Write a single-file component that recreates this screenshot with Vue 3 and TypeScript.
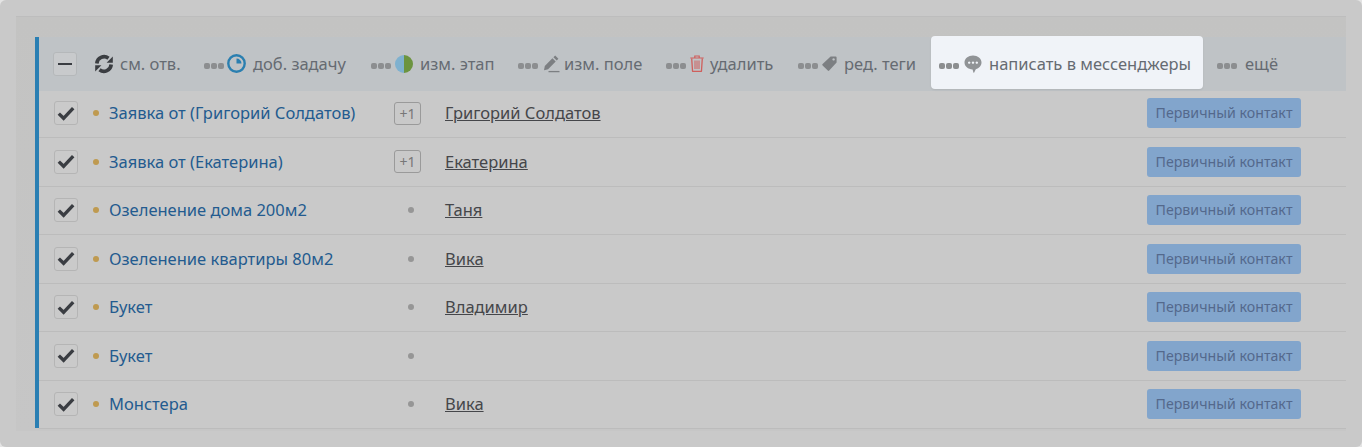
<script setup lang="ts">
interface Row { name: string; extra: boolean; contact: string }
const rows: Row[] = [
  { name: 'Заявка от (Григорий Солдатов)', extra: true, contact: 'Григорий Солдатов' },
  { name: 'Заявка от (Екатерина)', extra: true, contact: 'Екатерина' },
  { name: 'Озеленение дома 200м2', extra: false, contact: 'Таня' },
  { name: 'Озеленение квартиры 80м2', extra: false, contact: 'Вика' },
  { name: 'Букет', extra: false, contact: 'Владимир' },
  { name: 'Букет', extra: false, contact: '' },
  { name: 'Монстера', extra: false, contact: 'Вика' },
]
</script>

<template>
  <div class="page">
    <div class="panel">
      <div class="list">
        <div class="toolbar">
          <span class="minus"><i></i></span>
          <span class="act first">
            <svg class="ic-refresh" width="20" height="20" viewBox="0 0 20 20">
              <path d="M2.800 9.500A7.300 7.300 0 0 1 14.500 4.200" fill="none" stroke="#3b3e42" stroke-width="3.600"/>
              <path d="M18.800 2.600v6.200h-6.200z" fill="#3b3e42"/>
              <path d="M17.200 10.500A7.300 7.300 0 0 1 5.500 15.800" fill="none" stroke="#3b3e42" stroke-width="3.600"/>
              <path d="M1.200 17.400v-6.200h6.200z" fill="#3b3e42"/>
            </svg>
            <span class="txt t1">см. отв.</span>
          </span>
          <span class="act a2">
            <span class="dots"><i></i><i></i><i></i></span>
            <svg class="ic" width="19" height="19" viewBox="0 0 19 19">
              <circle cx="9.500" cy="9.500" r="8.200" fill="none" stroke="#2a7fb0" stroke-width="2.400"/>
              <path d="M9.500 4.500v5h5a5 5 0 0 0-5-5z" fill="#2a7fb0"/>
            </svg>
            <span class="txt t2">доб. задачу</span>
          </span>
          <span class="act a3">
            <span class="dots"><i></i><i></i><i></i></span>
            <svg class="ic" width="18" height="18" viewBox="0 0 18 18">
              <path d="M9 0a9 9 0 0 0 0 18z" fill="#7fb1cf"/>
              <path d="M9 0a9 9 0 0 1 0 18z" fill="#6c9440"/>
            </svg>
            <span class="txt t3">изм. этап</span>
          </span>
          <span class="act a4">
            <span class="dots"><i></i><i></i><i></i></span>
            <svg class="ic" width="18" height="18" viewBox="0 0 18 18">
              <path d="M13.200 0.600l3.200 3.200-1.700 1.800-3.300-3.300zM10.400 3.300l3.300 3.300-7.600 7.700-4.100 0.900 0.800-4.200z" fill="#7c7f82"/>
              <path d="M6.500 16.600h11" stroke="#7c7f82" stroke-width="1.300"/>
            </svg>
            <span class="txt t4">изм. поле</span>
          </span>
          <span class="act a5">
            <span class="dots"><i></i><i></i><i></i></span>
            <svg class="ic" width="14" height="17" viewBox="0 0 14 17">
              <path d="M0.300 3h13.400M4.800 2.600V1h4.400v1.600" fill="none" stroke="#cf5f5c" stroke-width="1.200"/>
              <path d="M1.700 3.400l0.800 12.400a0.800 0.800 0 0 0 .8 .7h7.400a0.800 0.800 0 0 0 .8-.7l0.800-12.400" fill="none" stroke="#cf5f5c" stroke-width="1.300"/>
              <path d="M5 5.500v8.500M7 5.500v8.500M9 5.500v8.500" stroke="#cf5f5c" stroke-width="1"/>
            </svg>
            <span class="txt t5">удалить</span>
          </span>
          <span class="act a6">
            <span class="dots"><i></i><i></i><i></i></span>
            <svg class="ic" width="15" height="15" viewBox="0 0 15 15">
              <path fill-rule="evenodd" d="M8.600 0.400h5a1 1 0 0 1 1 1v5L7.200 14.600a1 1 0 0 1-1.400 0L0.600 9.400a1 1 0 0 1 0-1.400zM11.600 2.200a1.200 1.200 0 1 0 0.010 0z" fill="#7c7f82"/>
            </svg>
            <span class="txt t6">ред. теги</span>
          </span>
          <span class="act hl">
            <span class="dots"><i></i><i></i><i></i></span>
            <svg class="ic" width="18" height="18" viewBox="0 0 18 18">
              <path fill-rule="evenodd" d="M9 0.500c4.700 0 8.500 3 8.500 7 0 3.200-2.400 5.800-5.700 6.700L10.200 17.600c-.2 .4-.7 .3-.8-.1L8.600 14.500C4 14.200 .5 11.300 .5 7.500c0-4 3.800-7 8.500-7zM5.200 6.400a1.200 1.200 0 1 0 0.010 0zM9 6.400a1.200 1.200 0 1 0 0.010 0zM12.800 6.400a1.200 1.200 0 1 0 0.010 0z" fill="#909396"/>
            </svg>
            <span class="txt t7">написать в мессенджеры</span>
          </span>
          <span class="act a8">
            <span class="dots"><i></i><i></i><i></i></span>
            <span class="txt t8">ещё</span>
          </span>
        </div>

        <div v-for="(r, i) in rows" :key="i" class="row">
          <span class="check">
            <svg width="18" height="15" viewBox="0 0 18 15">
              <path d="M1.800 7.600l4.800 4.700 9.600-10.200" fill="none" stroke="#3a3d42" stroke-width="3.400"/>
            </svg>
          </span>
          <span class="bullet"></span>
          <span class="name">{{ r.name }}</span>
          <span class="mid">
            <span v-if="r.extra" class="plus">+1</span>
            <span v-else class="gray"></span>
          </span>
          <span class="contact"><u v-if="r.contact">{{ r.contact }}</u></span>
          <span class="status">Первичный контакт</span>
        </div>
      </div>
    </div>
  </div>
</template>

<style>
html, body { background: #e4e4e4; }
</style>

<style scoped>
.page {
  box-sizing: border-box;
  height: 447px;
  padding: 16px 16px 0;
  background: #c9c9c9;
  border-radius: 6px;
  overflow: hidden;
  font-family: "Noto Sans", sans-serif;
}
.panel {
  height: 415px;
  box-sizing: border-box;
  border-top: 1px solid #bdbdbd;
  padding: 20px 0 0 19px;
  background: linear-gradient(#c3c3c2, #c6c6c6);
}
.list {
  height: 391px;
  border-left: 4px solid #2a7fb3;
  background: #c9c9c9;
}
.toolbar {
  display: flex;
  align-items: center;
  height: 54px;
  background: #bfc3c6;
  color: #666b72;
  font-size: 16.5px;
}
.minus {
  box-sizing: border-box;
  width: 24px;
  height: 24px;
  margin: 0 17px 0 14px;
  display: flex;
  align-items: center;
  justify-content: center;
  background: #c8cacc;
  border: 1px solid #b5b8ba;
  border-radius: 3px;
}
.minus i { width: 14px; height: 2px; background: #3a3d42; }
.act { display: flex; align-items: center; white-space: nowrap; }
.txt { display: inline-block; flex: none; margin-bottom: 2px; }
.t1 { width: 59px; margin-left: 6px; }
.t2 { width: 93px; }
.t3 { width: 73px; }
.t4 { width: 77px; }
.t5 { width: 63px; }
.t6 { width: 70px; }
.t7 { width: 203px; }
.dots { display: flex; gap: 1px; margin-right: 4px; padding-top: 3px; }
.dots i { width: 6px; height: 6px; background: #8c8e90; border-radius: 2px; }
.ic { margin-right: 7px; margin-bottom: 1px; flex: none; }
.a2 .dots { margin-right: 3px; }
.a4 .ic { margin-right: 4px; }
.a5 .ic { margin-right: 6px; }
.a2, .a3, .a4, .a5, .a6 { margin-left: 25px; }
.hl {
  box-sizing: border-box;
  align-self: flex-start;
  height: 53px;
  margin: -1px 0 0 17px;
  padding: 3px 11px 0 8px;
  background: #f0f3f8;
  border-radius: 4px;
  position: relative;
  box-shadow: 0 1px 2px rgba(0, 0, 0, 0.08);
}
.hl .dots { margin-right: 5px; }
.a8 { margin-left: 14px; }
.a8 .dots { margin-right: 8px; }
.row {
  display: grid;
  grid-template-columns: 24px 31px 285px 27px 726px 154px;
  align-items: center;
  height: 48.5px;
  box-sizing: border-box;
  padding: 0 0 0 15px;
  border-bottom: 1px solid #bcbcbc;
  font-size: 16.5px;
}
.toolbar + .row {
  height: 47px;
  padding: 0 0 2px 15px;
}
.check {
  box-sizing: border-box;
  width: 24px;
  height: 24px;
  display: flex;
  align-items: center;
  justify-content: center;
  background: #cacaca;
  border: 1px solid #b5b5b5;
  border-radius: 3px;
}
.bullet {
  width: 6px;
  height: 6px;
  margin-left: 15px;
  border-radius: 50%;
  background: #bf9a50;
}
.name { color: #235b8f; white-space: nowrap; margin-bottom: 1px; }
.mid { display: flex; justify-content: center; }
.plus {
  box-sizing: border-box;
  width: 27px;
  height: 23px;
  line-height: 21px;
  text-align: center;
  border: 1px solid #9a9a9a;
  border-radius: 3px;
  color: #777;
  font-size: 14px;
}
.gray { width: 6px; height: 6px; margin-left: 6px; border-radius: 50%; background: #969696; }
.contact { margin-left: 24px; margin-bottom: 1px; color: #45464a; white-space: nowrap; }
.status {
  height: 30px;
  line-height: 30px;
  text-align: center;
  background: #82a5cc;
  color: #54698c;
  border-radius: 3px;
  font-size: 14.2px;
  white-space: nowrap;
}
</style>
